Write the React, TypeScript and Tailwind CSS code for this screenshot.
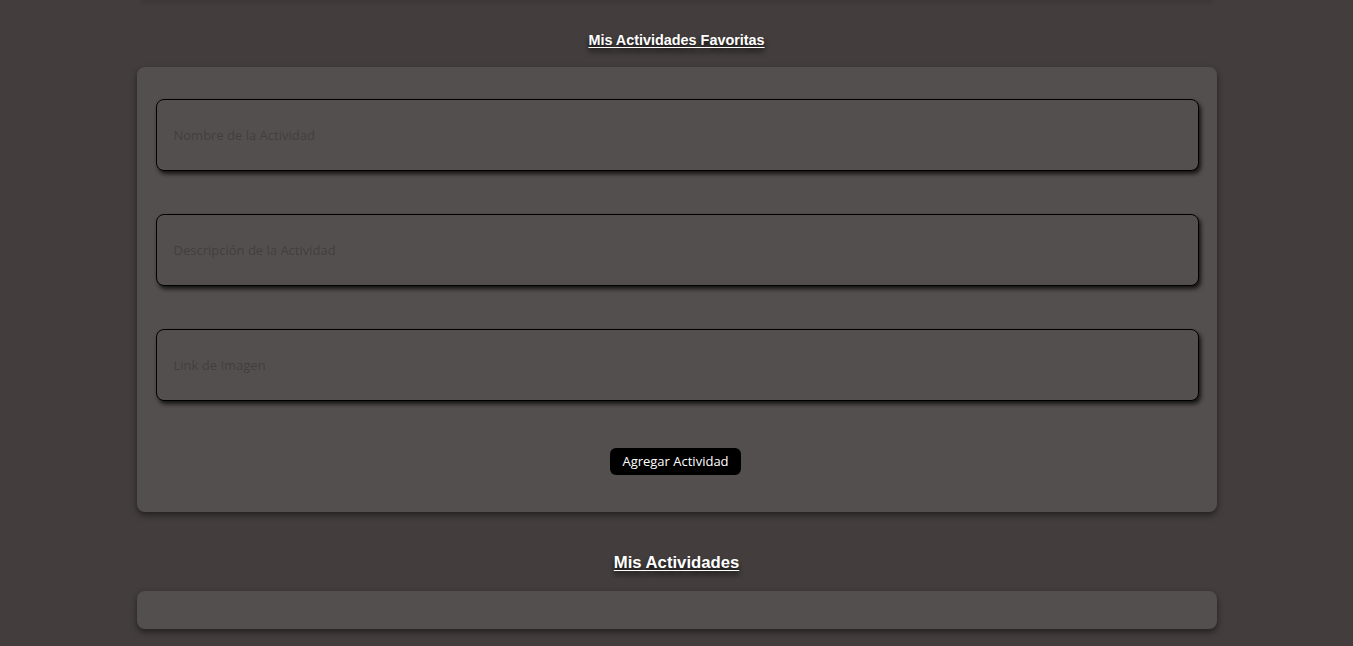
const fields = ["Nombre de la Actividad", "Descripción de la Actividad", "Link de Imagen"]

export default function App() {
  return (
    <div className="min-h-screen bg-[#433e3d] pb-4 font-['Liberation_Sans',Arial,sans-serif]">
      <div className="mx-auto h-[1px] w-[1070px] bg-[#3d3837] shadow-[0_1px_4px_rgba(0,0,0,0.35)]" />

      <h2 className="mt-[31px] text-center text-[14.4px] font-bold leading-4 text-white underline underline-offset-2 [text-shadow:0_4px_5px_rgba(0,0,0,0.9)]">
        Mis Actividades Favoritas
      </h2>

      <form className="mx-auto mt-[19px] flex w-[1080px] flex-col gap-[43px] rounded-lg bg-[#544f4f] pl-[19px] pr-[18px] pt-[32px] pb-[37px] shadow-[0_3px_6px_rgba(0,0,0,0.5)]">
        {fields.map((f) => (
          <input
            key={f}
            placeholder={f}
            className="h-[72px] w-full rounded-lg border border-black bg-[#544f4f] px-[17px] font-['Open_Sans','DejaVu_Sans',sans-serif] text-[13px] text-[#ddd] shadow-[2px_3px_4px_rgba(0,0,0,0.75)] outline-none placeholder:text-[#433e3e]"
          />
        ))}
        <div className="mt-[4px] flex justify-center pr-[3px]">
          <button
            type="button"
            className="h-[27px] w-[131px] rounded-[6px] bg-black font-['Open_Sans','DejaVu_Sans',sans-serif] text-[13px] text-white"
          >
            Agregar Actividad
          </button>
        </div>
      </form>

      <h2 className="mt-[41px] text-center text-[16.7px] font-bold leading-5 text-white underline underline-offset-2 [text-shadow:0_4px_5px_rgba(0,0,0,0.9)]">
        Mis Actividades
      </h2>

      <div className="mx-auto mt-[18px] h-[38px] w-[1080px] rounded-lg bg-[#544f4f] shadow-[0_3px_6px_rgba(0,0,0,0.5)]" />
    </div>
  )
}
